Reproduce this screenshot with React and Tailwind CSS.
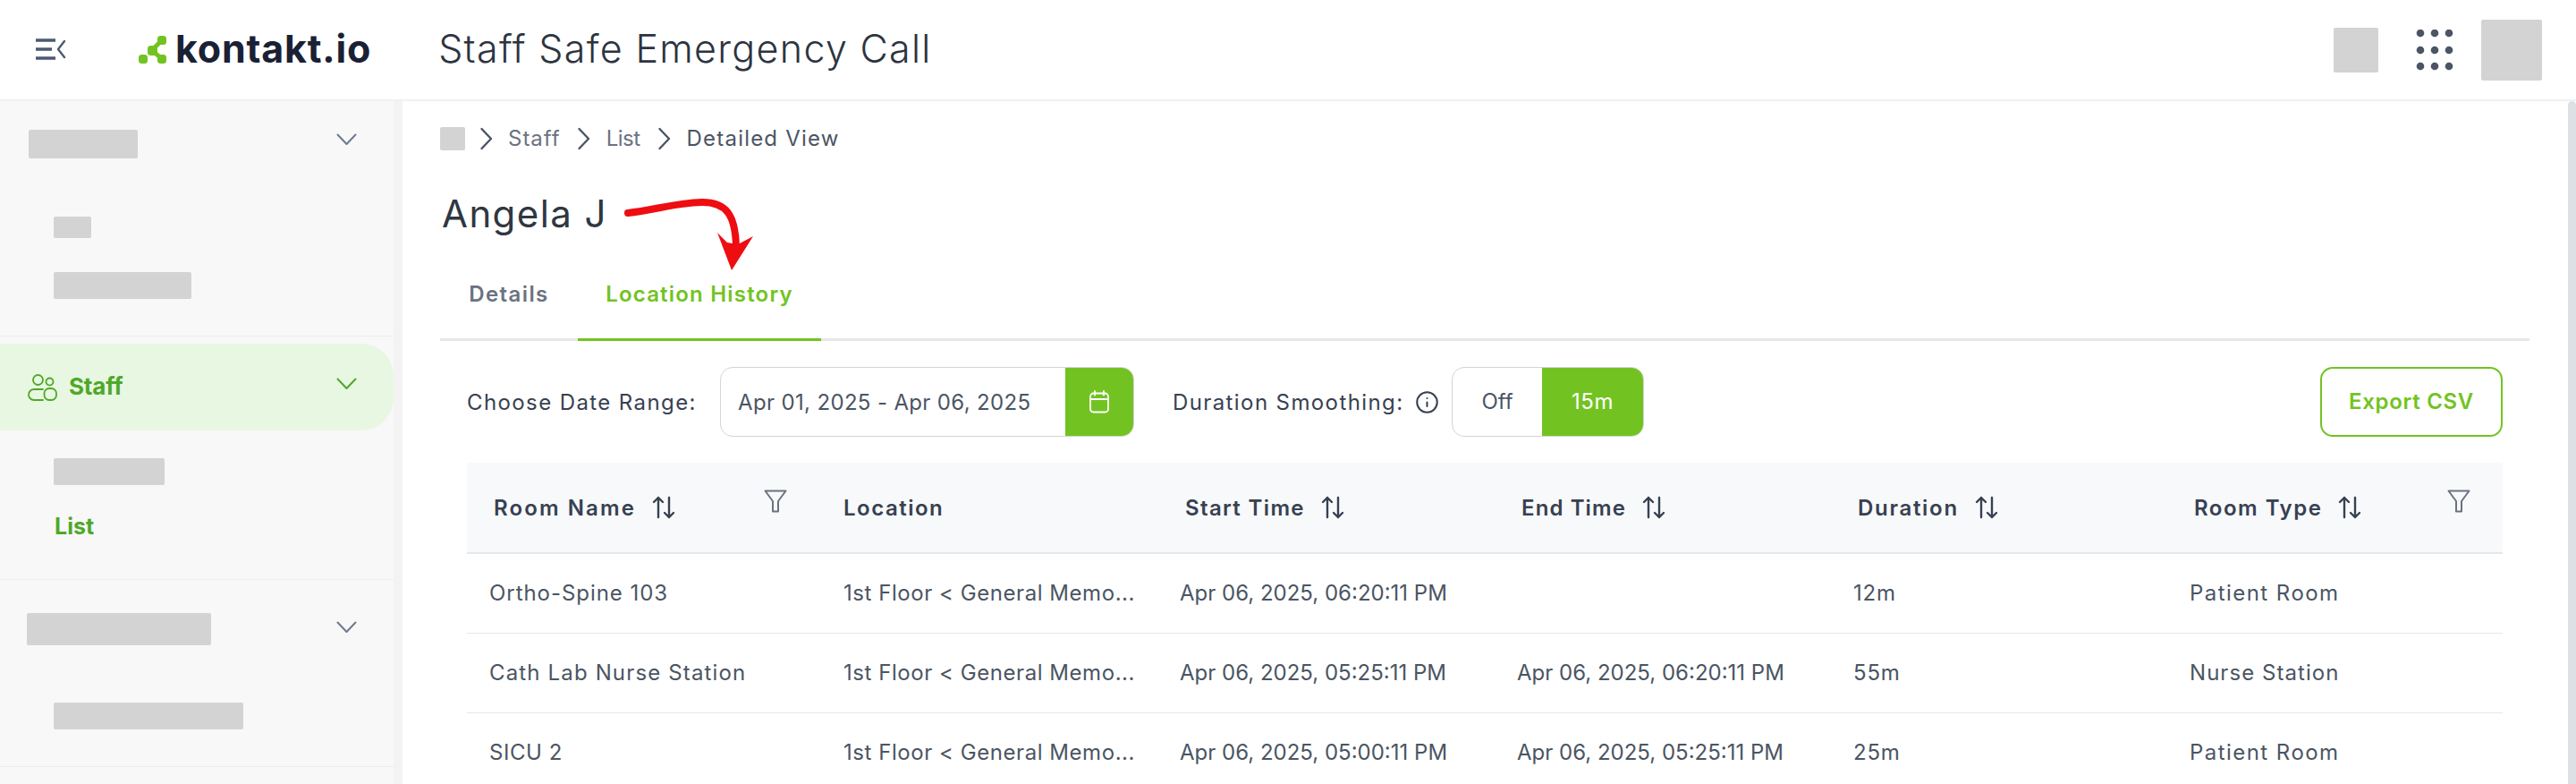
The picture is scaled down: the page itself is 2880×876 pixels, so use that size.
import React from "react";
import { Info } from "lucide-react";

const Block = ({ className }) => <div className={`bg-[#d3d3d3] rounded-[2px] ${className}`} />;

const Chevron = ({ color = "#6b7a90", className = "" }) => (
  <svg width="23" height="14" viewBox="0 0 23 14" fill="none" className={className}>
    <path d="M1.5 1.5 L11.5 12 L21.5 1.5" stroke={color} strokeWidth="2" strokeLinecap="round" strokeLinejoin="round" />
  </svg>
);

const Crumb = ({ className = "" }) => (
  <svg width="16" height="26" viewBox="0 0 16 26" fill="none" className={`shrink-0 ${className}`}>
    <path d="M2.5 2 L13 13 L2.5 24" stroke="#4b5563" strokeWidth="2.4" strokeLinecap="round" strokeLinejoin="round" />
  </svg>
);

const SortIcon = () => (
  <svg width="26" height="26" viewBox="0 0 26 26" fill="none" className="shrink-0" stroke="#374151" strokeWidth="2.4" strokeLinecap="round" strokeLinejoin="round">
    <path d="M7 24 V2 M2 7 L7 2 L12 7" />
    <path d="M19 2 V24 M14 19 L19 24 L24 19" />
  </svg>
);

const Funnel = ({ className = "" }) => (
  <svg width="26" height="26" viewBox="0 0 26 26" fill="none" stroke="#6b7280" strokeWidth="2" strokeLinejoin="round" className={className}>
    <path d="M1.5 1.5 H24.5 L16 13 V24.5 H10 V13 Z" />
  </svg>
);

const Head = ({ label, sort = true, filter, pl, tr }) => (
  <div className={`relative flex items-center ${pl} gap-[18px]`}>
    <span className={`pt-[2px] font-semibold text-[24px] ${tr} text-[#374151] whitespace-nowrap`}>{label}</span>
    {sort && <SortIcon />}
    {filter && <Funnel className={filter} />}
  </div>
);

const Cell = ({ children, pl = "pl-[16px]", tr = "tracking-[0.55px]" }) => (
  <div className={`${pl} ${tr} whitespace-nowrap`}>{children}</div>
);

const loc = "1st Floor < General Memo...";
const Date1 = ({ children }) => <Cell pl="pl-[15px]" tr="tracking-[0px]">{children}</Cell>;

const Row = ({ children }) => (
  <div className="grid h-[89px] grid-cols-[405px_377px_377px_375px_376px_366px] items-center border-b border-[#e5e7eb] text-[24px] text-[#4b5563]">
    {children}
  </div>
);

export default function App() {
  return (
    <div className="relative h-[876px] w-[2880px] overflow-hidden bg-white font-['Inter',sans-serif]">
      {/* Top bar */}
      <header className="flex h-[113px] items-center border-b-2 border-[#eef1f6] bg-white">
        <svg width="34" height="26" viewBox="0 0 34 26" fill="none" className="ml-[40px] -mt-[2px] shrink-0">
          <path d="M0 3 H22 M0 13 H18 M0 23 H22" stroke="#4b5a72" strokeWidth="3.4" />
          <path d="M32 4 L25 13 L32 22" stroke="#4b5a72" strokeWidth="2.4" strokeLinecap="round" strokeLinejoin="round" />
        </svg>
        <svg width="32" height="32" viewBox="0 0 32 32" className="ml-[81px] shrink-0">
          <path d="M26 5 L15 16 L26 26" stroke="#72c322" strokeWidth="5" fill="none" />
          <rect x="21" y="0" width="10" height="10" rx="3.5" fill="#72c322" />
          <rect x="10" y="11" width="11" height="11" rx="3.5" fill="#72c322" />
          <rect x="21" y="21" width="10" height="10" rx="3.5" fill="#72c322" />
          <rect x="0" y="21" width="10" height="10" rx="3.5" fill="#72c322" />
        </svg>
        <span className="ml-[9px] text-[43px] font-bold tracking-[0.8px] leading-none text-[#1a2135] -mt-[3px]">kontakt.io</span>
        <span className="ml-[75px] text-[43px] font-light tracking-[1.3px] text-[#2d3440] -mt-[3px] whitespace-nowrap">Staff Safe Emergency Call</span>
        <div className="ml-auto flex items-center">
          <Block className="h-[50px] w-[50px]" />
          <svg width="42" height="46" viewBox="0 0 42 46" className="ml-[42px] shrink-0" fill="#4b5563">
            {[4, 20, 36].map((x) => [4, 23, 41].map((y) => <circle key={`${x}-${y}`} cx={x + 1} cy={y} r="4.3" />))}
          </svg>
          <Block className="ml-[31px] mr-[38px] h-[68px] w-[68px]" />
        </div>
      </header>

      <div className="flex h-[763px]">
        {/* Sidebar */}
        <aside className="w-[450px] shrink-0 border-r-[10px] border-[#f3f3f3] bg-[#f8f8f8]">
          <div className="flex h-[96px] items-center justify-between pl-[32px] pr-[41px]">
            <Block className="h-[32px] w-[122px]" />
            <Chevron className="-mt-[10px]" />
          </div>
          <Block className="ml-[60px] mt-[33px] h-[24px] w-[42px]" />
          <Block className="ml-[60px] mt-[38px] h-[30px] w-[154px]" />
          <div className="mt-[41px] border-b border-[#ececec]" />

          <div className="mt-[8px] flex h-[97px] items-center justify-between rounded-r-[36px] bg-[#e8f7e1] pl-[31px] pr-[41px]">
            <div className="flex items-center gap-[13px]">
              <svg width="33" height="30" viewBox="0 0 33 30" fill="none" stroke="#4fa82a" strokeWidth="1.8">
                <circle cx="11.5" cy="6.5" r="5.5" />
                <circle cx="24.5" cy="8.5" r="4" />
                <path d="M17 17 H7 a6 6 0 0 0 0 12 H17" strokeLinecap="round" />
                <rect x="18.5" y="16" width="13.5" height="13" rx="5.5" />
              </svg>
              <span className="text-[26px] font-bold tracking-[-0.2px] text-[#4fa82a] -mt-[2px]">Staff</span>
            </div>
            <Chevron color="#4fa82a" className="-mt-[8px]" />
          </div>
          <Block className="ml-[60px] mt-[31px] h-[30px] w-[124px]" />
          <div className="ml-[61px] mt-[31px] text-[25px] leading-[30px] font-bold text-[#4fa82a]">List</div>
          <div className="mt-[44px] border-b border-[#ececec]" />

          <div className="mt-[8px] flex h-[97px] items-center justify-between pl-[30px] pr-[41px]">
            <Block className="-mt-[3px] h-[36px] w-[206px]" />
            <Chevron className="-mt-[8px]" />
          </div>
          <Block className="ml-[60px] mt-[32px] h-[30px] w-[212px]" />
          <div className="mt-[41px] border-b border-[#ececec]" />
        </aside>

        {/* Main */}
        <main className="min-w-0 flex-1 pl-[42px] pr-[52px]">
          <nav className="mt-[29px] flex h-[26px] items-center text-[24px] text-[#6b7280]">
            <Block className="h-[26px] w-[28px]" />
            <Crumb className="ml-[16px]" />
            <span className="ml-[16px] tracking-[1px]">Staff</span>
            <Crumb className="ml-[18px]" />
            <span className="ml-[17px] tracking-[-0.5px]">List</span>
            <Crumb className="ml-[19px]" />
            <span className="ml-[17px] tracking-[1.2px] text-[#4b5563]">Detailed View</span>
          </nav>

          <h1 className="mt-[46px] h-[50px] pl-[2px] text-[42px] leading-[50px] font-normal tracking-[1.4px] text-[#2f3742]">Angela J</h1>

          <div className="flex h-[117px] items-end border-b-[3px] border-[#e5e7eb]">
            <div className="-mb-[3px] flex h-[100px] w-[154px] items-center justify-center border-b-[3px] border-transparent pb-[2px] text-[24px] font-semibold tracking-[1.4px] text-[#6b7280]">Details</div>
            <div className="-mb-[3px] flex h-[100px] w-[272px] items-center justify-center border-b-[3px] border-[#72c322] pb-[2px] text-[24px] font-semibold tracking-[1.2px] text-[#72c322]">Location History</div>
          </div>

          <div className="mt-[29px] flex h-[78px] items-center px-[30px] text-[24px]">
            <span className="w-[283px] pt-[2px] tracking-[1.4px] text-[#374151] whitespace-nowrap">Choose Date Range:</span>
            <div className="flex h-[78px] w-[463px] overflow-hidden rounded-[14px] border border-[#d1d5db]">
              <span className="flex flex-1 items-center pl-[19px] pt-[2px] tracking-[0.35px] text-[#4b5563] whitespace-nowrap">Apr 01, 2025 - Apr 06, 2025</span>
              <span className="flex w-[76px] items-center justify-center bg-[#72c322]">
                <svg width="24" height="26" viewBox="0 0 24 26" fill="none" stroke="#fff" strokeWidth="1.8" strokeLinecap="round">
                  <rect x="2" y="3.5" width="20" height="21" rx="3.5" />
                  <path d="M2 10 H22 M7 1 V5.5 M17 1 V5.5" />
                </svg>
              </span>
            </div>
            <span className="ml-[43px] w-[254px] pt-[2px] tracking-[1.4px] text-[#374151] whitespace-nowrap">Duration Smoothing:</span>
            <Info size={27} strokeWidth={1.8} className="ml-[17px] shrink-0 text-[#374151]" />
            <div className="ml-[14px] flex h-[78px] w-[215px] overflow-hidden rounded-[14px] border border-[#d1d5db]">
              <span className="flex w-[100px] items-center justify-center text-[#4b5563]">Off</span>
              <span className="flex flex-1 items-center justify-center bg-[#72c322] tracking-[0.5px] text-white">15m</span>
            </div>
            <button className="ml-auto flex h-[78px] w-[204px] items-center justify-center rounded-[14px] border-2 border-[#72c322] text-[24px] font-semibold tracking-[0.7px] text-[#72c322]">Export CSV</button>
          </div>

          <div className="mx-[30px] mt-[29px]">
            <div className="grid h-[102px] grid-cols-[405px_377px_377px_375px_376px_366px] items-center border-b-2 border-[#e5e7eb] bg-[#f8f9fb]">
              <Head label="Room Name" tr="tracking-[2.1px]" pl="pl-[30px]" filter="absolute left-[332px] -top-[1px]" />
              <Head label="Location" tr="tracking-[1.5px]" sort={false} pl="pl-[16px]" />
              <Head label="Start Time" tr="tracking-[1.35px]" pl="pl-[21px]" />
              <Head label="End Time" tr="tracking-[1.1px]" pl="pl-[20px]" />
              <Head label="Duration" tr="tracking-[1.7px]" pl="pl-[21px]" />
              <Head label="Room Type" tr="tracking-[1.5px]" pl="pl-[21px]" filter="absolute left-[304px] -top-[1px]" />
            </div>
            <Row>
              <Cell pl="pl-[25px]" tr="tracking-[0.95px]">Ortho-Spine 103</Cell>
              <Cell>{loc}</Cell>
              <Date1>Apr 06, 2025, 06:20:11 PM</Date1>
              <Date1></Date1>
              <Cell tr="tracking-[0.8px]">12m</Cell>
              <Cell tr="tracking-[1.45px]">Patient Room</Cell>
            </Row>
            <Row>
              <Cell pl="pl-[25px]" tr="tracking-[1.15px]">Cath Lab Nurse Station</Cell>
              <Cell>{loc}</Cell>
              <Date1>Apr 06, 2025, 05:25:11 PM</Date1>
              <Date1>Apr 06, 2025, 06:20:11 PM</Date1>
              <Cell tr="tracking-[0.8px]">55m</Cell>
              <Cell tr="tracking-[1.05px]">Nurse Station</Cell>
            </Row>
            <Row>
              <Cell pl="pl-[25px]" tr="tracking-[0.55px]">SICU 2</Cell>
              <Cell>{loc}</Cell>
              <Date1>Apr 06, 2025, 05:00:11 PM</Date1>
              <Date1>Apr 06, 2025, 05:25:11 PM</Date1>
              <Cell tr="tracking-[0.8px]">25m</Cell>
              <Cell tr="tracking-[1.45px]">Patient Room</Cell>
            </Row>
          </div>
        </main>
      </div>

      {/* Scrollbar thumb */}
      <div className="absolute right-0 top-[113px] bottom-0 w-[9px] rounded-t-full bg-[#dde1e6]" />

      {/* Annotation arrow */}
      <svg className="absolute left-[690px] top-[215px]" width="160" height="95" viewBox="690 215 160 95" fill="none">
        <path d="M702 238 C730 235 760 226 785 226 C812 226 822 240 823 275" stroke="#ee0d11" strokeWidth="8" strokeLinecap="round" />
        <path d="M802 260 L818 302 L842 264 L825 273 L813 271 Z" fill="#ee0d11" />
      </svg>
    </div>
  );
}
